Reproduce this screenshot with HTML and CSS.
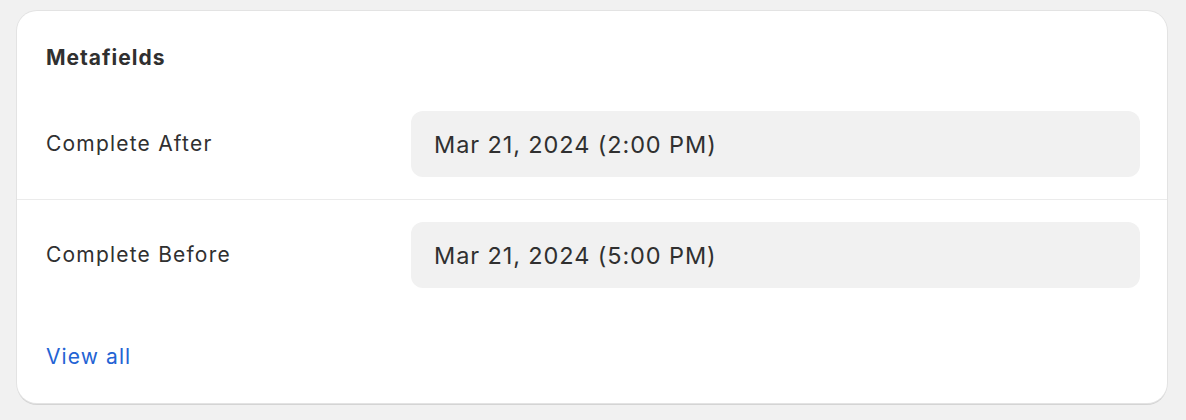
FILE: index.html
```html
<!DOCTYPE html>
<html>
<head>
<meta charset="utf-8">
<link rel="stylesheet" href="styles.css">
</head>
<body>
<div class="page">
  <section class="card">
    <h2 class="card-title">Metafields</h2>
    <div class="row">
      <div class="label">Complete After</div>
      <div class="value">Mar 21, 2024 (2:00 PM)</div>
    </div>
    <div class="row row-last">
      <div class="label">Complete Before</div>
      <div class="value">Mar 21, 2024 (5:00 PM)</div>
    </div>
    <div class="footer"><a class="link" href="#">View all</a></div>
  </section>
</div>
</body>
</html>
```

FILE: styles.css
```css
html, body {
  margin: 0;
  padding: 0;
  background: #f1f1f1;
}
body {
  font-family: Inter, "Noto Sans", sans-serif;
  color: #303030;
}
.page {
  padding: 11px 19px 17px 17px;
}
.card {
  background: #ffffff;
  border-radius: 20px;
  box-shadow: 0 0 0 1px #e3e3e3, 0 2px 0 0 #d4d4d4;
  height: 392px;
  box-sizing: border-box;
}
.card-title {
  margin: 0;
  padding: 35px 29px 19px;
  font-size: 21px;
  line-height: 24px;
  font-weight: 650;
  letter-spacing: 1px;
}
.row {
  display: grid;
  grid-template-columns: 365px 1fr;
  align-items: center;
  padding: 22px 27px 22px 29px;
  border-bottom: 1px solid #ebebeb;
}
.row-last {
  border-bottom: none;
}
.label {
  font-size: 21px;
  line-height: 24px;
  letter-spacing: 1.2px;
}
.value {
  background: #f1f1f1;
  border-radius: 12px;
  height: 66px;
  display: flex;
  align-items: center;
  padding-left: 23px;
  font-size: 23.5px;
  letter-spacing: 0.9px;
}
.footer {
  padding: 35px 29px 34px;
  line-height: 24px;
}
.link {
  color: #2463d4;
  text-decoration: none;
  font-size: 21px;
  letter-spacing: 1.1px;
}
```
